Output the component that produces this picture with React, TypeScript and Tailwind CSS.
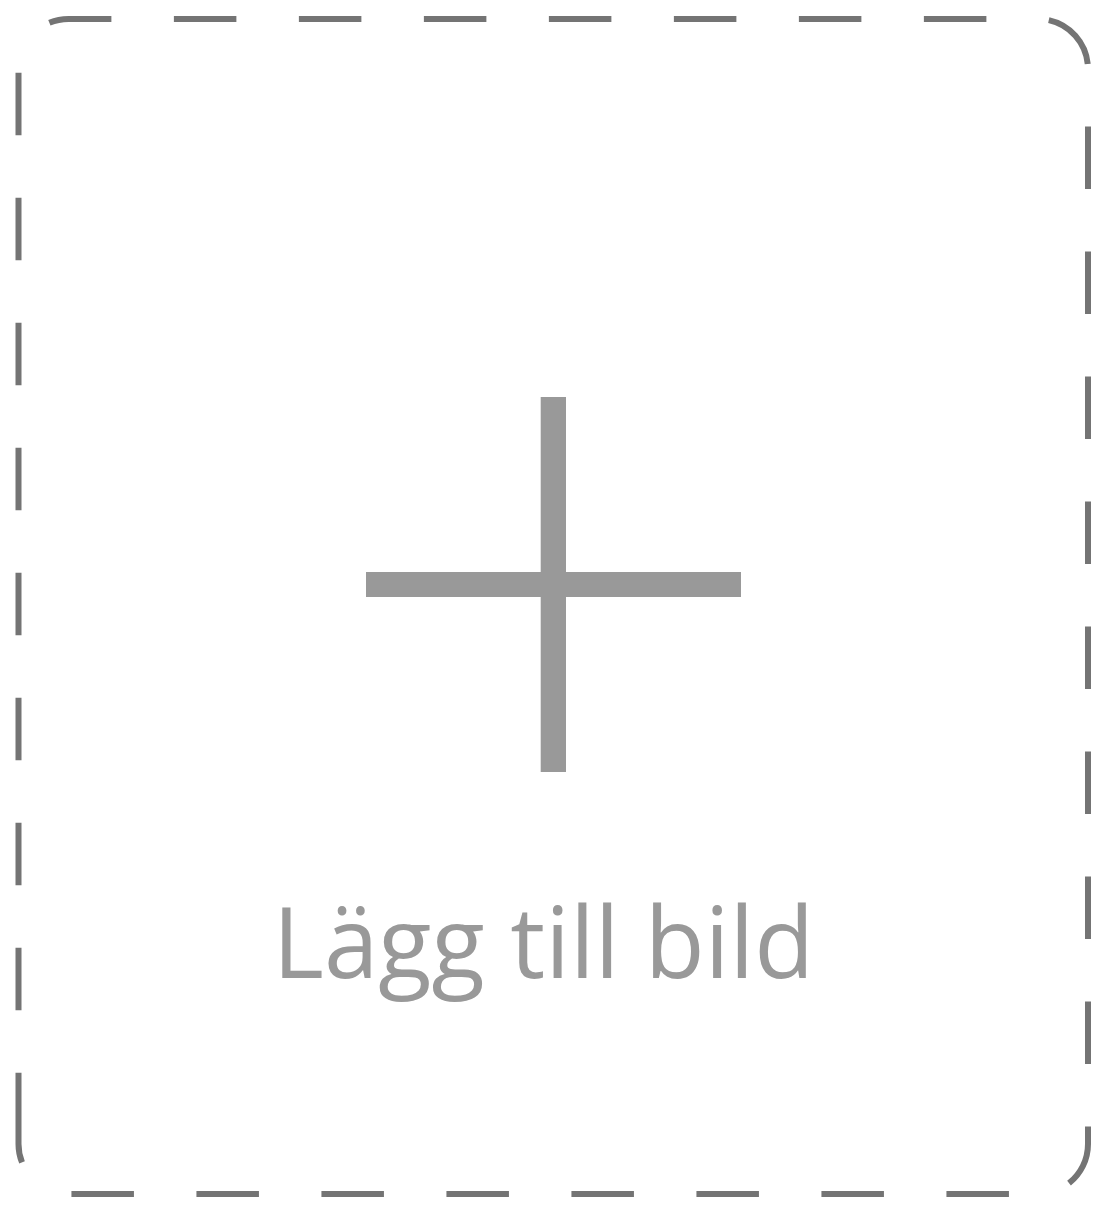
import React from 'react';

export default function App() {
  return (
    <div className="relative w-[1109px] h-[1212px] bg-white overflow-hidden">
      {/* Dashed frame */}
      <svg
        className="absolute inset-0 pointer-events-none"
        width="1109"
        height="1212"
        viewBox="0 0 1109 1212"
        fill="none"
      >
        <path
          d="M18.5 1135.2 L18.5 69 A50 50 0 0 1 68.5 19 L1038 19 A50 50 0 0 1 1088 69 L1088 1144 A50 50 0 0 1 1038 1194 L68.5 1194 A50 50 0 0 1 18.5 1144 Z"
          stroke="#747474"
          strokeWidth="6"
          strokeDasharray="62.5 62.5"
        />
      </svg>

      <div className="flex flex-col items-center pt-[397px]">
        {/* Plus */}
        <svg width="375" height="375" viewBox="0 0 375 375" className="ml-[-2px] shrink-0">
          <rect x="174.7" y="0" width="25.3" height="375" fill="#999999" />
          <rect x="0" y="175" width="375" height="25" fill="#999999" />
        </svg>

        <div
          className="mt-[119px] ml-[-22px] text-[98px] leading-none text-[#999999] whitespace-nowrap"
          style={{ fontFamily: '"Open Sans", "Noto Sans", sans-serif' }}
        >
          Lägg till bild
        </div>
      </div>
    </div>
  );
}
